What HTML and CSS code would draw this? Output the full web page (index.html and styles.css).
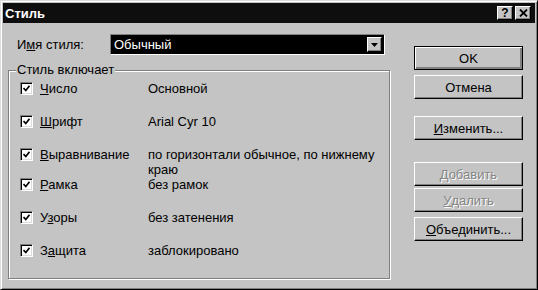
FILE: index.html
```html
<!DOCTYPE html>
<html>
	<head>
		<meta charset="utf-8">
		<title>Стиль</title>
		<link rel="stylesheet" href="styles.css">
	</head>
	<body>
		<div class="window">
			<div class="titlebar">
				<span class="title">Стиль</span>
				<div class="caption-btns">
					<span class="cap-btn">?</span>
					<span class="cap-btn">
						<svg width="9" height="8" viewBox="0 0 9 8"><path d="M1 0.5 L8 7.5 M8 0.5 L1 7.5" stroke="#000" stroke-width="1.8"/></svg>
					</span>
				</div>
			</div>
			<div class="content">
				<div class="left">
					<div class="name-row">
						<span class="name-label">И<u>м</u>я стиля:</span>
						<div class="combo">
							<span class="combo-text">Обычный</span>
							<span class="combo-btn">
								<svg width="7" height="4" viewBox="0 0 7 4"><path d="M0 0 H7 L3.5 4 Z" fill="#000"/></svg>
							</span>
						</div>
					</div>
					<fieldset class="group">
						<legend>Стиль включает</legend>
						<div class="item">
							<span class="check"><svg width="7" height="7" viewBox="0 0 7 7"><path d="M0.5 3 L2.8 5.5 L6.5 0.8" stroke="#000" stroke-width="1.7" fill="none"/></svg></span>
							<span class="item-label"><u>Ч</u>исло</span>
							<span class="item-value">Основной</span>
						</div>
						<div class="item">
							<span class="check"><svg width="7" height="7" viewBox="0 0 7 7"><path d="M0.5 3 L2.8 5.5 L6.5 0.8" stroke="#000" stroke-width="1.7" fill="none"/></svg></span>
							<span class="item-label"><u>Ш</u>рифт</span>
							<span class="item-value">Arial Cyr 10</span>
						</div>
						<div class="item short">
							<span class="check"><svg width="7" height="7" viewBox="0 0 7 7"><path d="M0.5 3 L2.8 5.5 L6.5 0.8" stroke="#000" stroke-width="1.7" fill="none"/></svg></span>
							<span class="item-label"><u>В</u>ыравнивание</span>
							<span class="item-value">по горизонтали обычное, по нижнему<br>краю</span>
						</div>
						<div class="item">
							<span class="check"><svg width="7" height="7" viewBox="0 0 7 7"><path d="M0.5 3 L2.8 5.5 L6.5 0.8" stroke="#000" stroke-width="1.7" fill="none"/></svg></span>
							<span class="item-label"><u>Р</u>амка</span>
							<span class="item-value">без рамок</span>
						</div>
						<div class="item">
							<span class="check"><svg width="7" height="7" viewBox="0 0 7 7"><path d="M0.5 3 L2.8 5.5 L6.5 0.8" stroke="#000" stroke-width="1.7" fill="none"/></svg></span>
							<span class="item-label">У<u>з</u>оры</span>
							<span class="item-value">без затенения</span>
						</div>
						<div class="item">
							<span class="check"><svg width="7" height="7" viewBox="0 0 7 7"><path d="M0.5 3 L2.8 5.5 L6.5 0.8" stroke="#000" stroke-width="1.7" fill="none"/></svg></span>
							<span class="item-label">З<u>а</u>щита</span>
							<span class="item-value">заблокировано</span>
						</div>
					</fieldset>
				</div>
				<div class="buttons">
					<div class="btn default">OK</div>
					<div class="btn btn-cancel">Отмена</div>
					<div class="btn btn-edit"><u>И</u>зменить...</div>
					<div class="btn btn-add disabled"><u>Д</u>обавить</div>
					<div class="btn btn-del disabled"><u>У</u>далить</div>
					<div class="btn btn-merge"><u>О</u>бъединить...</div>
				</div>
			</div>
		</div>
	</body>
</html>
```

FILE: styles.css
```css
*{
    margin:0;
    padding:0;
    box-sizing:border-box;
}
body{
    background:#c4c4c4;
    font-family:"Liberation Sans", Arial, sans-serif;
    font-size:13px;
    color:#000;
}
u{
    text-decoration:underline;
    text-underline-offset:1px;
}
.window{
    width:538px;
    height:290px;
    display:flex;
    flex-direction:column;
    background:#c4c4c4;
    border:1px solid;
    border-color:#dcdcdc #000 #000 #dcdcdc;
    box-shadow:inset 1px 1px #fff, inset -1px -1px #808080;
    padding:2px;
}
.titlebar{
    height:20px;
    background:#0e0e0e;
    display:flex;
    align-items:center;
    justify-content:space-between;
    padding:0 4px 0 2px;
}
.title{
    color:#fff;
    font-weight:bold;
    font-size:13px;
}
.caption-btns{
    display:flex;
    gap:2px;
}
.cap-btn{
    width:16px;
    height:14px;
    background:#c4c4c4;
    border:1px solid;
    border-color:#fff #000 #000 #fff;
    box-shadow:inset -1px -1px #808080;
    display:flex;
    align-items:center;
    justify-content:center;
    font-weight:bold;
    font-size:12px;
    line-height:1;
}
.content{
    flex:1;
    display:flex;
    padding:11px 0 0 5px;
}
.left{
    width:382px;
    display:flex;
    flex-direction:column;
    padding-bottom:8px;
}
.name-row{
    height:21px;
    display:flex;
    align-items:center;
}
.name-label{
    width:102px;
    padding-left:9px;
}
.combo{
    width:275px;
    height:21px;
    display:flex;
    background:#000;
    border:1px solid;
    border-color:#808080 #fff #fff #808080;
    box-shadow:inset 1px 1px #000;
    padding:2px;
}
.combo-text{
    flex:1;
    color:#fff;
    line-height:15px;
    padding-left:1px;
}
.combo-btn{
    width:15px;
    background:#c4c4c4;
    border:1px solid;
    border-color:#fff #000 #000 #fff;
    box-shadow:inset -1px -1px #808080;
    display:flex;
    align-items:center;
    justify-content:center;
}
.group{
    flex:1;
    margin-top:8px;
    border:1px solid #808080;
    box-shadow:inset 1px 1px #fff, 1px 1px #fff;
    padding:4px 11px 0 11px;
}
.group legend{
    line-height:14px;
    margin-left:-4px;
    padding:0 1px;
    background:#c4c4c4;
}
.item{
    display:grid;
    grid-template-columns:13px 101px 1fr;
    column-gap:7px;
    height:33px;
    line-height:15px;
}
.item.short{
    height:30px;
}
.check{
    width:13px;
    height:13px;
    margin-top:1px;
    background:#fff;
    border:1px solid;
    border-color:#808080 #fff #fff #808080;
    box-shadow:inset 1px 1px #000, inset -1px -1px #dcdcdc;
    display:flex;
    align-items:center;
    justify-content:center;
}
.buttons{
    width:109px;
    margin-left:24px;
    display:flex;
    flex-direction:column;
    padding-top:12px;
}
.btn{
    height:24px;
    display:flex;
    align-items:center;
    justify-content:center;
    border:1px solid;
    border-color:#fff #000 #000 #fff;
    box-shadow:inset -1px -1px #808080;
}
.btn.default{
    border:1px solid #000;
    box-shadow:inset 1px 1px #fff, inset -2px -2px #808080, inset -1px -1px #000;
}
.btn-cancel{ margin-top:5px; }
.btn-edit{ margin-top:17px; }
.btn-add{ margin-top:22px; }
.btn-del{ margin-top:2px; }
.btn-merge{ margin-top:5px; }
.btn.disabled{
    color:#858585;
    text-shadow:1px 1px #fff;
}
```
